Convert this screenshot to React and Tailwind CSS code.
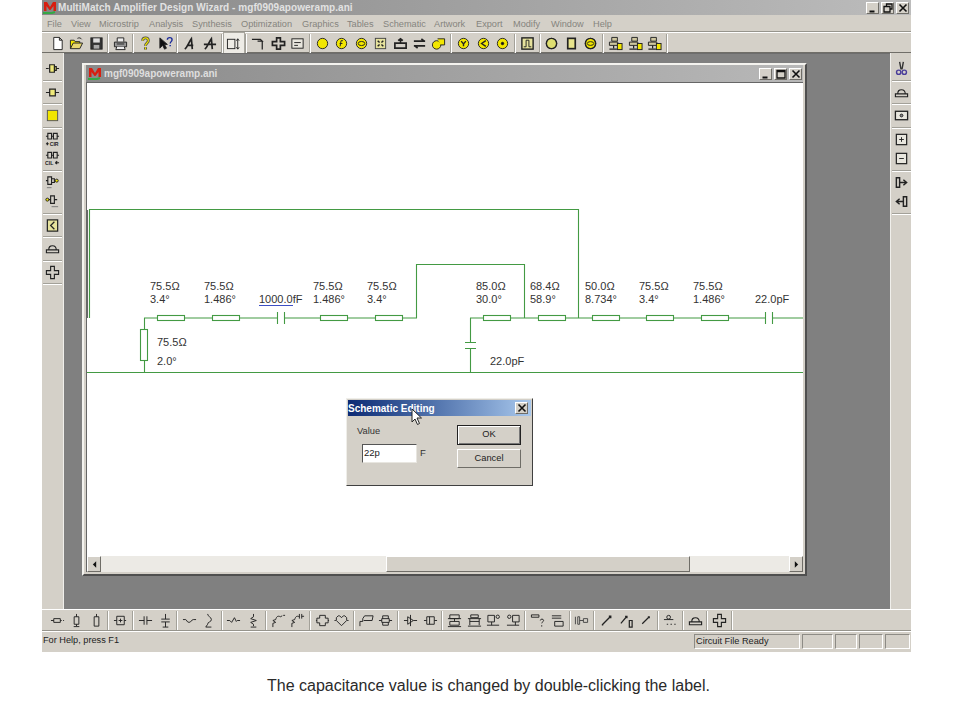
import React from 'react';

const ui = { fontFamily: '"Liberation Sans", Arial, sans-serif' };

const raised = 'border border-t-white border-l-white border-r-[#6f6d67] border-b-[#6f6d67]';
const sunken = 'border border-t-[#8d8b85] border-l-[#8d8b85] border-r-white border-b-white';

const Y = '#f2e600';

const Dot = ({ children, fill = Y }) => (
  <>
    <circle cx="8" cy="8" r="5.5" fill={fill} />
    {children}
  </>
);

const icons = {
  new: <path d="M4 1.5h6l3 3v10H4zM10 1.5v3h3" fill="#fff" />,
  open: (
    <>
      <path d="M1.5 13.5v-9h4l1 1.5h5v2" fill={Y} />
      <path d="M1.5 13.5l3-6h10l-3 6z" fill="#e8d870" />
      <path d="M9 2.5c2-1 3.5-.5 4.5 1" />
    </>
  ),
  save: (
    <>
      <rect x="2" y="2" width="12" height="12" fill="#333" />
      <rect x="4.5" y="2.5" width="7" height="4.5" fill="#ddd" stroke="none" />
      <rect x="5" y="9.5" width="6" height="4" fill="#aaa" stroke="none" />
    </>
  ),
  print: (
    <>
      <path d="M4.5 6V2h7v4" fill="#eee" />
      <path d="M1.5 6.5h13v5h-13z" fill="#999" />
      <path d="M4 11.5l-1 3h10l-1-3" fill="#eee" />
      <path d="M4 8.5h8" />
    </>
  ),
  help: (
    <>
      <path d="M5 5c0-4 6-4 6 0 0 2.500-3 2.500-3 5.500M8 12v2.500" stroke="#444" strokeWidth="3" />
      <path d="M5 5c0-4 6-4 6 0 0 2.500-3 2.500-3 5.500M8 12v2.500" stroke={Y} strokeWidth="1.300" />
    </>
  ),
  helpArrow: (
    <>
      <path d="M2 2v11l3-3 2 4 2-1-2-4h3z" fill="#111" />
      <path d="M10 4c0-3 5-3 5 0 0 2-2 2-2 4M13 9.500v1.500" stroke="#1a2a9a" strokeWidth="1.500" />
    </>
  ),
  a1: <path d="M3 14c3-2 4-7 7-11l1 11M6 10h6" strokeWidth="1.800" />,
  a2: <path d="M3 14c3-2 4-7 7-11l1 11M2 9h13" strokeWidth="1.800" />,
  toggle: (
    <>
      <rect x="1.500" y="3.500" width="8" height="10" />
      <path d="M12.500 3v11M11 5l1.500-2L14 5M11 12l1.500 2 1.500-2" />
    </>
  ),
  hammer: <path d="M1 3.500h9l2 2H7M12 5.500v9" strokeWidth="1.300" />,
  cross: <path d="M6 2h4v4h4.500v4H10v4H6v-4H1.500V6H6z" strokeWidth="1.800" />,
  box: (
    <>
      <rect x="2" y="3" width="12" height="10" fill="#e8e6de" />
      <path d="M4.500 7h7M4.500 10h4" />
    </>
  ),
  y1: <Dot />,
  y2: <Dot><path d="M6.500 11l1-6h2M6 8h3" /></Dot>,
  y3: <Dot><ellipse cx="8" cy="8" rx="3.500" ry="2.200" /></Dot>,
  y4: (
    <>
      <rect x="2.500" y="2.500" width="11" height="11" fill="#e6e29c" stroke="#444" />
      <path d="M5 5l2 2M11 5L9 7M5 11l2-2M11 11L9 9" strokeWidth="1.500" />
    </>
  ),
  y5: <path d="M2 13V7.500h12V13zM8 7.500V3M5.500 5L8 3l2.500 2" strokeWidth="1.800" />,
  y6: <path d="M2 5.500h12M10 3l3 2.500M2 10.500h12M6 13l-3-2.500" strokeWidth="1.800" />,
  y7: (
    <>
      <circle cx="6" cy="9.500" r="4.500" fill={Y} />
      <path d="M7 3h7.500v6.500H10" fill={Y} />
    </>
  ),
  y8: <Dot><path d="M5.500 5.500L8 8.500l2.500-3M8 8.500V11" strokeWidth="1.500" /></Dot>,
  y9: <Dot><path d="M10.500 5L6 8l4.500 3" strokeWidth="1.500" /></Dot>,
  y10: <Dot><circle cx="8" cy="8" r="1.300" fill="#111" /></Dot>,
  pulse: (
    <>
      <rect x="2" y="2" width="12" height="12" fill="#e6e29c" strokeWidth="1.500" />
      <path d="M4 11.500h2.500v-7h3v7H12" />
    </>
  ),
  c1: <Dot fill="#dede70"><circle cx="8" cy="8" r="5.500" strokeWidth="1.500" /></Dot>,
  c2: <rect x="4" y="2.500" width="8" height="11" fill="#e8e48c" strokeWidth="1.800" />,
  c3: <Dot><ellipse cx="8" cy="8" rx="5.500" ry="5.500" strokeWidth="1.500" /><ellipse cx="8" cy="8" rx="3.500" ry="2" /></Dot>,
  net1: (
    <>
      <path d="M4 1.500h6v4H4zM1.500 6.500h9v3.500h-9z" fill="#cfc79f" />
      <path d="M6 10v3M1.500 14h8" strokeWidth="1.300" />
      <rect x="10" y="8" width="5" height="6.500" fill={Y} />
    </>
  ),
  cirA: <path d="M1 8h3M5 4h5v8H5zM10 6h2v4h-2zM12 8h3" fill="#efe97a" strokeWidth="1.300" />,
  cirB: <path d="M1 8h4M5 4.500h6v7H5zM11 8h4" fill="#efe97a" strokeWidth="1.300" />,
  sq: <rect x="2.500" y="2.500" width="11" height="11" fill={Y} stroke="#555" />,
  cir: (
    <>
      <path d="M1 4.500h2M3 1.500h4v6H3zM9 1.500h4v6H9zM7 4.500h2M13 4.500h2" strokeWidth="1.200" />
      <path d="M1 12.500h3M2.500 11v3" strokeWidth="1.200" />
      <text x="5" y="15" fontSize="5.500" fontWeight="700" fill="#222" stroke="none" style={ui}>CIR</text>
    </>
  ),
  cil: (
    <>
      <path d="M1 4.500h2M3 1.500h4v6H3zM9 1.500h4v6H9zM7 4.500h2M13 4.500h2" strokeWidth="1.200" />
      <path d="M11 12.500h4M11 12.500l2-1.500M11 12.500l2 1.500" strokeWidth="1.200" />
      <text x="0" y="15" fontSize="5.500" fontWeight="700" fill="#222" stroke="none" style={ui}>CIL</text>
    </>
  ),
  inA: (
    <>
      <path d="M1 6h2M3 2h4v8H3zM7 4h3v4H7z" strokeWidth="1.200" />
      <circle cx="12.500" cy="6" r="1.600" fill={Y} />
      <path d="M2 13.500h5" stroke="#777" />
    </>
  ),
  inB: (
    <>
      <circle cx="2.500" cy="6" r="1.600" fill={Y} />
      <path d="M4 6h2M6 2h4v8H6zM10 6h3" strokeWidth="1.200" />
      <path d="M7 13.500h7" stroke="#777" />
    </>
  ),
  chip: (
    <>
      <rect x="2.500" y="2" width="11" height="12" fill="#e6e29c" strokeWidth="1.300" />
      <path d="M10 4L6 8l4 4" strokeWidth="1.300" />
    </>
  ),
  bump: <path d="M1.500 12.500h13v-3h-13zM4 9.500C4 6 5 5 8 5s4 1 4 4.500" strokeWidth="1.200" />,
  plus: <path d="M6 1.500h4v4.500h4.500v4H10v4.500H6V10H1.500V6H6z" strokeWidth="1.200" />,
  cut: (
    <>
      <path d="M6 1l1.500 8M10 1L8.500 9" stroke="#333" strokeWidth="1.500" />
      <circle cx="5" cy="12" r="2.300" stroke="#4a3d9a" strokeWidth="1.500" />
      <circle cx="11" cy="12" r="2.300" stroke="#4a3d9a" strokeWidth="1.500" />
    </>
  ),
  window: (
    <>
      <rect x="1.500" y="3.500" width="13" height="9" fill="#e8e6de" strokeWidth="1.400" />
      <circle cx="8" cy="8" r="1.500" fill="#888" />
    </>
  ),
  zoomIn: <><rect x="2.500" y="2.500" width="11" height="11" fill="#e8e6de" strokeWidth="1.300" /><path d="M5.500 8h5M8 5.500v5" /></>,
  zoomOut: <><rect x="2.500" y="2.500" width="11" height="11" fill="#e8e6de" strokeWidth="1.300" /><path d="M5.500 8h5" /></>,
  portIn: <path d="M2.500 3h3.500v10H2.500zM6 8h7M10 5l3.500 3-3.500 3" strokeWidth="1.500" />,
  portOut: <path d="M10 3h3.500v10H10zM10 8H3M6 5L2.500 8 6 11" strokeWidth="1.500" />,
  res: <path d="M1 8h3M4 6h7v4H4zM11 8h1.500M14 8h1" />,
  resV: <path d="M8 1v3M5.500 4h5v8h-5zM8 12v2M5 14.500h6" />,
  resO: <path d="M8 1v3M5.500 4h5v10h-5z" />,
  term: <path d="M1 8h3M4 3.500h8v9H4zM12 8h2M8 6v4M6 8h4" />,
  capH: <path d="M1 8h5.500M6.500 3.500v9M9.500 3.500v9M9.500 8H15" />,
  capV: <path d="M8 1v5.500M3.500 6.500h9M3.500 9.500h9M8 9.500V15M5 15h6" />,
  indH: <path d="M1 7h3c1 0 1 3 3.500 3S10 7 12 7h3" />,
  indV: <path d="M6 1c0 3 4 3 4 6s-4 2-4 5M6 12l-2 3h6" />,
  zigH: <path d="M1 8h3l2 2 3-5 2 4 1-1h3" />,
  zigV: <path d="M8 1v3l-3 2 6 2-6 2 3 2v2M5 15h6" />,
  stubA: <path d="M2 15v-4l3-1-3-2 3-1c1-4 3-4 5-3l2-1M13 2.500h2" />,
  stubB: <path d="M2 15v-4l3-1-3-2 3-1c1-4 3-4 5-3M10 1v5M12.500 1v5M12.500 3.500H15" />,
  wheel: <path d="M5 2.500h6v3h3v5h-3v3H5v-3H2v-5h3zM1 8h1M14 8h1" />,
  heart: <path d="M8 13.500L2.500 8V5l2-2h1.500L8 5l2-2h1.500l2 2v3zM14 8h1.500M.5 8H2" />,
  bend: <path d="M1 14V9h3V6l2-3h9l-1 5H5" />,
  drum: <path d="M1 8h3M5 6V3h6v3M4 6h8v4H4zM5 10v3h6v-3M12 8h3" />,
  dio: <path d="M1 8h4M5 4l6 4-6 4zM8 2v12M11 8h4" />,
  blk: <path d="M1 8h3M4 4h8v8H4zM7 4v8M12 8h3" />,
  stackA: <path d="M3 2h10v4H3zM1 6h14M3 9h10v4H3zM1 14.500h14M8 6v3" />,
  stackB: <path d="M4 2h8v3H4zM1 6h14M3 6v7M13 6v7M3 9h10M1 14h14" />,
  t1: <><path d="M2 2.500h7v7H2zM1 13h13M6 9.500V13" /><circle cx="12.500" cy="4" r="1.800" /></>,
  t2: <><circle cx="3.500" cy="4" r="1.800" /><path d="M7 2.500h7v7H7zM1 13h13M10 9.500V13" /></>,
  barQ: <path d="M1.500 2h8v2.500h-8zM11 8c0-2 3.500-2 3.500 0 0 1.500-2 1.500-2 3M12.500 13v1.500" />,
  barBox: <path d="M2 3h10M2 5.500h10M5 9h9v5H5z" />,
  link: <path d="M1.500 4v8M4 4h2v8H4zM6 8h4M10 6h4.500v4H10z" stroke="#444" />,
  pin1: <path d="M4 12l8-8M10.500 3.500h2v2M3 12.500h1.500" strokeWidth="1.500" />,
  pin2: <path d="M2 11l6-7M6.500 3.500h2v2M11 8h3v7h-3z" strokeWidth="1.300" />,
  pin3: <path d="M4.500 11.500l7-7M10.500 4h1.500v1.500" strokeWidth="1.300" />,
  dots: <path d="M6 2.500a2 2 0 110 4 2 2 0 010-4zM1 7h10M4 12h1.500M8 12h1.500M12 12h1.500" />,
};

const top = ['new', 'open', 'save', '|', 'print', '|', 'help', 'helpArrow', '|', 'a1', 'a2', '|', 'toggle', '|', 'hammer', 'cross', 'box', '|', 'y1', 'y2', 'y3', 'y4', 'y5', 'y6', 'y7', '|', 'y8', 'y9', 'y10', '|', 'pulse', '|', 'c1', 'c2', 'c3', '|', 'net1', 'net1', 'net1', '|'];
const left = ['cirA', '|', 'cirB', '|', 'sq', '|', 'cir', 'cil', '|', 'inA', 'inB', '|', 'chip', '|', 'bump', '|', 'plus', '|'];
const right = ['cut', '|', 'bump', '|', 'window', '|', 'zoomIn', 'zoomOut', '|', 'portIn', 'portOut', '|'];
const bottom = ['res', 'resV', 'resO', '|', 'term', '|', 'capH', 'capV', '|', 'indH', 'indV', '|', 'zigH', 'zigV', '|', 'stubA', 'stubB', '|', 'wheel', 'heart', '|', 'bend', 'drum', '|', 'dio', 'blk', '|', 'stackA', 'stackB', 't1', 't2', '|', 'barQ', 'barBox', '|', 'link', '|', 'pin1', 'pin2', 'pin3', '|', 'dots', '|', 'bump', '|', 'plus', '|'];

const menus = [
  ['File', 'w-[24px]'], ['View', 'w-[28px]'], ['Microstrip', 'w-[50px]'], ['Analysis', 'w-[43px]'],
  ['Synthesis', 'w-[49px]'], ['Optimization', 'w-[61px]'], ['Graphics', 'w-[45px]'], ['Tables', 'w-[36px]'],
  ['Schematic', 'w-[51px]'], ['Artwork', 'w-[42px]'], ['Export', 'w-[37px]'], ['Modify', 'w-[38px]'],
  ['Window', 'w-[42px]'], ['Help', 'w-[30px]'],
];

const Tool = ({ name, active, flat }) => (
  <div className={`${flat ? 'w-[19.45px]' : 'w-[19.5px]'} h-[19.5px] shrink-0 flex items-center justify-center ${active ? 'bg-[#eeece6] outline outline-[#a9a79f]' : ''}`}>
    <svg viewBox="0 0 16 16" className="w-[15px] h-[15px]" fill="none" stroke="#222">
      {icons[name]}
    </svg>
  </div>
);

const HBar = ({ items }) => (
  <div className="flex items-center">
    {items.map((it, i) =>
      it === '|' ? (
        <div key={i} className="w-[5.3px] h-[19px] shrink-0 flex justify-center">
          <div className="w-[2px] h-full border-l border-l-[#a3a199] border-r border-r-white" />
        </div>
      ) : (
        <Tool key={i} name={it} flat active={it === 'toggle'} />
      ),
    )}
  </div>
);

const VBar = ({ items }) => (
  <div className="flex flex-col items-center">
    {items.map((it, i) =>
      it === '|' ? (
        <div key={i} className="h-[4px] w-[19px] shrink-0 flex items-center">
          <div className="h-[2px] w-full border-t border-t-[#a3a199] border-b border-b-white" />
        </div>
      ) : (
        <Tool key={i} name={it} />
      ),
    )}
  </div>
);

const Cap = ({ type, size = 'w-[13px] h-[12px]' }) => (
  <div className={`${size} ${raised} bg-[#d4d0c8] flex items-center justify-center shrink-0`}>
    <svg viewBox="0 0 10 10" className="w-[10px] h-[10px]" fill="none" stroke="#111" strokeWidth="1.300">
      {type === 'min' && <path d="M1.500 8.500h5" strokeWidth="2" />}
      {type === 'max' && <path d="M1 1.500h8v7.500H1zM1 2.500h8" />}
      {type === 'restore' && <path d="M3.500 3V1h5.500v5H7M1 3.500h6V9H1z" />}
      {type === 'close' && <path d="M1.500 1.500l7 7M8.500 1.500l-7 7" strokeWidth="1.600" />}
    </svg>
  </div>
);

const Logo = () => (
  <svg viewBox="0 0 14 13" className="w-[14px] h-[13px] shrink-0">
    <path d="M1 10V1h3l3 5 3-5h3v9h-2.500V5L7.500 9h-1L3.500 5v5z" fill="#d81e10" />
    <path d="M0 12h9l3-1" stroke="#35a845" strokeWidth="2" fill="none" />
  </svg>
);

const G = '#439a43';

const rH = [157, 212, 320, 375, 483, 538, 592, 646, 701];

const labels = [
  [150, 290, '75.5Ω'], [150, 303, '3.4°'], [204, 290, '75.5Ω'], [204, 303, '1.486°'],
  [259, 303, '1000.0fF'], [313, 290, '75.5Ω'], [313, 303, '1.486°'], [367, 290, '75.5Ω'], [367, 303, '3.4°'],
  [157, 346, '75.5Ω'], [157, 365, '2.0°'],
  [476, 290, '85.0Ω'], [476, 303, '30.0°'], [530, 290, '68.4Ω'], [530, 303, '58.9°'],
  [585, 290, '50.0Ω'], [585, 303, '8.734°'], [639, 290, '75.5Ω'], [639, 303, '3.4°'],
  [693, 290, '75.5Ω'], [693, 303, '1.486°'], [755, 303, '22.0pF'], [490, 365, '22.0pF'],
];

const Schematic = () => (
  <svg viewBox="87 83 716 473" className="w-[716px] h-[473px] block" fill="none" strokeWidth="1.100">
    <path d="M89.500 318V209.500H578.500V318" stroke={G} />
    <path d="M87.500 210v108" stroke="#666" />
    <path d="M144.500 372V318H416.500V264.500H524.500V318" stroke={G} />
    <path d="M470.500 372V318H803" stroke={G} />
    <path d="M87 372.500H803" stroke={G} />
    {rH.map((x) => (
      <rect key={x} x={x + 0.5} y="315.500" width="27" height="5" fill="#fff" stroke={G} />
    ))}
    <rect x="140.500" y="329.500" width="7" height="31" fill="#fff" stroke={G} />
    <rect x="278" y="310" width="6" height="16" fill="#fff" />
    <path d="M277.500 312v12M284.500 312v12" stroke={G} />
    <rect x="766" y="310" width="6" height="16" fill="#fff" />
    <path d="M765.500 312v12M772.500 312v12" stroke={G} />
    <rect x="462" y="343" width="16" height="5" fill="#fff" />
    <path d="M465 342.500h11M465 348.500h11" stroke={G} />
    <path d="M259 305.500h34" stroke="#3d4fc4" />
    {labels.map(([x, y, t], i) => (
      <text key={i} x={x} y={y} fill="#333" stroke="none" fontSize="11" style={ui}>{t}</text>
    ))}
  </svg>
);

const ScrollBtn = ({ dir }) => (
  <div className={`w-[14px] h-[16px] ${raised} bg-[#d4d0c8] flex items-center justify-center shrink-0`}>
    <svg viewBox="0 0 6 8" className="w-[5px] h-[7px]">
      <path d={dir === 'l' ? 'M5 0v8L1 4z' : 'M1 0v8l4-4z'} fill="#111" />
    </svg>
  </div>
);

const Child = () => (
  <div className="ml-[18px] mt-[9px] w-[725px] h-[513px] bg-[#d4d0c8] border-2 border-t-[#f4f3ef] border-l-[#f4f3ef] border-r-[#4f4f4f] border-b-[#4f4f4f] px-[2px] pb-[2px] flex flex-col">
    <div className="h-[17px] flex items-center shrink-0 bg-gradient-to-r from-[#8a8a8a] to-[#b8b8b8] pl-[2px] pr-[1px]">
      <Logo />
      <span className="ml-[2px] text-[10px] font-bold text-[#dedede] whitespace-nowrap">mgf0909apoweramp.ani</span>
      <div className="ml-auto flex gap-[2px]">
        <Cap type="min" />
        <Cap type="max" />
        <Cap type="close" />
      </div>
    </div>
    <div className="border-l border-t border-[#666] bg-white flex-1 flex flex-col w-[717px]">
      <Schematic />
      <div className="h-[16px] flex bg-[#eceae5]">
        <ScrollBtn dir="l" />
        <div className="ml-[285px] w-[304px] h-[16px] bg-[#d4d0c8] border border-t-white border-l-white border-r-[#6f6d67] border-b-[#6f6d67]" />
        <div className="flex-1" />
        <ScrollBtn dir="r" />
      </div>
    </div>
  </div>
);

const Dialog = () => (
  <div style={ui} className="absolute left-[346px] top-[398px] w-[187px] h-[88px] bg-[#d4d0c8] border border-t-[#efeee9] border-l-[#efeee9] border-r-[#404040] border-b-[#404040] p-[1px]">
    <div className="h-[16px] flex items-center bg-gradient-to-r from-[#0d2a74] to-[#a9c8ec] pr-[3px]">
      <span className="text-[10px] font-bold text-white whitespace-nowrap">Schematic Editing</span>
      <div className="ml-auto"><Cap type="close" /></div>
    </div>
    <div className="flex pl-[9px] pt-[9px]">
      <div className="w-[100px] shrink-0">
        <div className="text-[9.300px] text-[#333] leading-[13px]">Value</div>
        <div className="flex items-center mt-[6px] ml-[5px]">
          <div className="w-[55px] h-[19px] bg-white border border-t-[#555] border-l-[#555] border-r-[#e8e6e0] border-b-[#e8e6e0] text-[9.500px] leading-[16px] pl-[1px] text-[#222]">22p</div>
          <span className="ml-[3px] text-[9.500px] text-[#333]">F</span>
        </div>
      </div>
      <div className="flex flex-col gap-[4px]">
        <div className="w-[64px] h-[20px] border border-[#222] bg-[#d4d0c8] flex items-center justify-center text-[9.300px] text-[#222] shadow-[inset_1px_1px_0_#fff,inset_-1px_-1px_0_#777]">OK</div>
        <div className={`w-[64px] h-[19px] ${raised} bg-[#d4d0c8] flex items-center justify-center text-[9.300px] text-[#222]`}>Cancel</div>
      </div>
    </div>
  </div>
);

const Pointer = () => (
  <svg viewBox="0 0 12 18" className="absolute left-[411px] top-[408px] w-[12px] h-[18px]">
    <path d="M1 1v13l3-3 2.500 5.500 2-1L6 10h4.500z" fill="#fff" stroke="#222" strokeWidth="1" />
  </svg>
);

export default function App() {
  return (
    <div style={ui} className="relative w-[960px] h-[720px] bg-white overflow-hidden">
      <div className="ml-[42px] w-[869px] h-[652px] bg-[#d4d0c8] flex flex-col">
        {/* title bar */}
        <div className="h-[15px] shrink-0 flex items-center bg-gradient-to-r from-[#878787] to-[#bcbcbc] pl-[1px] pr-[2px]">
          <Logo />
          <span className="ml-[1px] text-[10px] tracking-[0.05px] font-bold text-[#e2e2e2] whitespace-nowrap">MultiMatch Amplifier Design Wizard - mgf0909apoweramp.ani</span>
          <div className="ml-auto flex gap-[2px]">
            <Cap type="min" />
            <Cap type="restore" />
            <Cap type="close" />
          </div>
        </div>

        {/* menu */}
        <div className="h-[17px] shrink-0 flex items-center pl-[5px] pt-[4px] border-b border-b-[#96948c] text-[9.200px] text-[#85847e]">
          {menus.map(([m, w]) => (
            <span key={m} className={`${w} shrink-0`}>{m}</span>
          ))}
        </div>

        {/* main toolbar */}
        <div className="h-[21px] shrink-0 flex items-center pl-[5.500px] pt-[1px] border-t border-t-white border-b border-b-[#706e68]">
          <HBar items={top} />
        </div>

        {/* workspace */}
        <div className="flex-1 flex min-h-0">
          <div className="w-[22px] shrink-0 pt-[6px] flex justify-center border-r border-r-[#f0efeb]">
            <VBar items={left} />
          </div>
          <div className="flex-1 bg-[#808080] border-t border-t-[#6d6d6d]">
            <Child />
          </div>
          <div className="w-[21px] shrink-0 pt-[6px] flex justify-center border-l border-l-[#f0efeb]">
            <VBar items={right} />
          </div>
        </div>

        {/* bottom toolbar */}
        <div className="h-[22px] shrink-0 flex items-center pl-[5.500px] border-t border-t-white border-b border-b-[#96948c]">
          <HBar items={bottom} />
        </div>

        {/* status bar */}
        <div className="h-[21px] shrink-0 flex items-center pl-[1px] pb-[2px] border-t border-t-white text-[9.200px] text-[#222]">
          <span className="w-[651px] shrink-0">For Help, press F1</span>
          <div className={`w-[106px] h-[15px] ${sunken} leading-[13px] pl-[1px] mr-[2px] shrink-0`}>Circuit File Ready</div>
          <div className={`w-[31px] h-[15px] ${sunken} mr-[2px] shrink-0`} />
          <div className={`w-[22px] h-[15px] ${sunken} mr-[2px] shrink-0`} />
          <div className={`w-[24px] h-[15px] ${sunken} mr-[2px] shrink-0`} />
          <div className={`w-[25px] h-[15px] ${sunken} shrink-0`} />
        </div>
      </div>

      <p className="mt-[26px] ml-[267px] text-[16px] leading-[16px] text-[#2a2a2a] whitespace-nowrap">
        The capacitance value is changed by double-clicking the label.
      </p>

      <Dialog />
      <Pointer />
    </div>
  );
}
